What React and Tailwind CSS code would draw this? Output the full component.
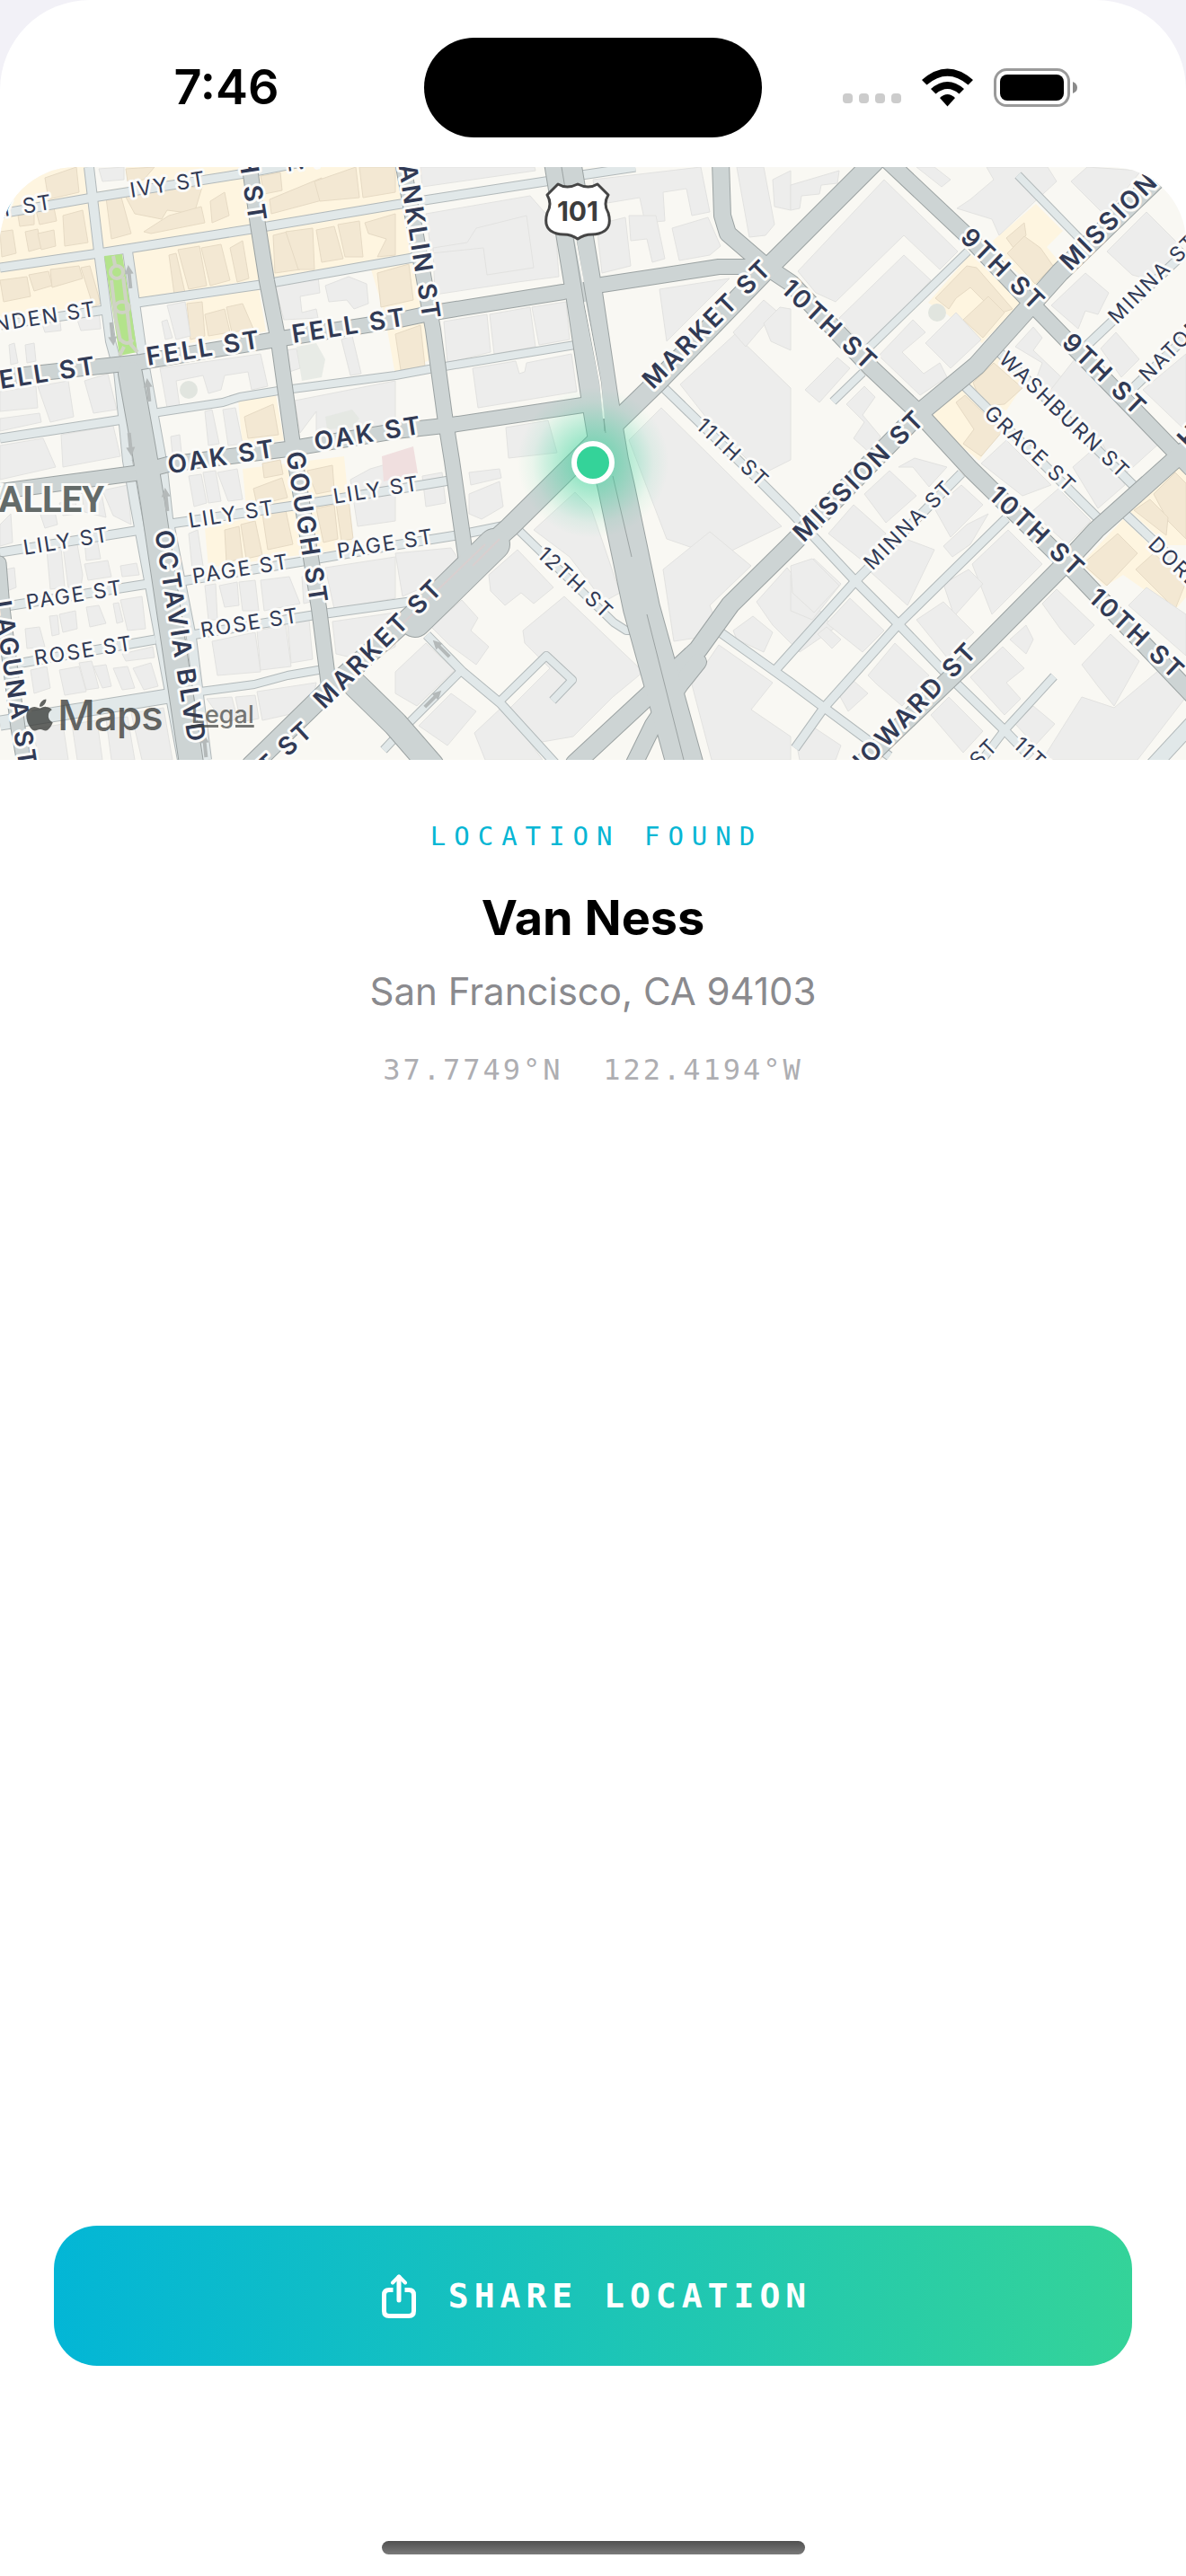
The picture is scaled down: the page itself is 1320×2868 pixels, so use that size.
import { FaApple } from 'react-icons/fa';

// Building footprints and lots of the map, as point lists
const warmZones = [
  '0,186 455,186 468,284 0,355',
  '207,336 288,321 296,369 211,382',
  '413,300 466,292 480,400 440,418 428,350',
  '265,445 307,440 316,490 270,498',
  '270,522 383,508 393,610 232,632 228,588 275,577',
  '1153,227 1183,257 1165,275 1182,295 1152,322 1110,283 1105,268',
  '1080,283 1137,337 1093,382 1054,350 1033,337',
  '1107,393 1140,427 1120,457 1097,450 1075,427',
  '1070,432 1113,477 1090,513 1033,467',
  '1310,515 1320,522 1320,607 1300,607 1258,570',
  '1250,578 1320,645 1320,665 1307,680 1250,640 1230,653 1203,628',
];

const warmBuildings = [
  '50,198 85,186 88,214 54,222', '20,240 38,237 38,250 22,252', '40,234 60,231 63,246 44,250',
  '70,240 92,234 98,270 72,274', '0,258 14,256 18,282 2,286', '28,258 42,255 46,276 32,280', '42,260 60,256 62,274 46,278',
  '0,312 30,308 34,330 4,336', '32,306 54,302 58,318 38,324', '56,300 88,296 92,310 58,320', '90,298 100,296 112,338 104,342',
  '118,220 134,216 146,260 124,266', '136,212 225,208 216,238 186,234 180,244 150,238', '160,258 188,240 224,230 228,248 168,260',
  '234,224 250,214 255,240 236,248', '140,188 172,186 160,200 142,202', '188,284 196,282 206,326 194,328', '198,278 222,274 230,318 210,322',
  '224,276 246,272 256,312 234,318', '256,276 270,268 277,310 264,314', '290,196 312,192 314,212 294,216', '300,222 358,198 362,222 302,238',
  '350,202 396,186 400,220 356,224', '400,186 440,186 440,214 404,220', '304,262 320,258 334,300 306,304', '318,258 348,254 350,300 332,300',
  '352,256 372,252 382,288 358,292', '376,250 400,246 404,286 384,286', '406,248 440,238 440,284 420,286 430,266 410,260',
  '208,338 225,336 228,374 212,378', '228,350 250,344 256,370 232,374', '252,342 270,338 282,366 258,370',
  '420,304 455,294 460,334 424,342', '440,372 468,362 473,408 446,412', '272,464 304,450 310,484 276,488',
  '292,516 312,512 315,528 294,532', '282,544 314,532 320,554 286,562', '250,590 266,586 270,622 252,626', '268,584 284,580 292,618 274,622',
  '292,572 318,568 326,606 298,612', '342,524 370,518 372,546 352,550', '352,566 372,562 376,600 360,604', '374,560 388,556 393,600 380,602',
  '1120,265 1140,248 1142,262 1128,276', '1121,282 1140,263 1158,276 1172,296 1152,316', '1041,332 1076,296 1087,298 1127,344 1110,350 1080,320 1064,332 1056,344',
  '1072,356 1100,330 1118,348 1094,376', '1083,426 1106,404 1138,432 1118,450 1094,452', '1064,448 1074,440 1116,480 1092,508 1072,494 1084,478',
  '1284,550 1308,526 1320,538 1320,600 1300,580', '1262,568 1280,556 1300,576 1298,596', '1205,628 1244,594 1266,616 1232,652', '1264,634 1284,616 1320,648 1308,678',
];

const greyBuildings = [
  '110,188 138,186 138,200 114,202', '44,352 66,350 68,368 50,370', '10,384 16,382 20,404 12,406', '28,384 38,382 40,402 30,404', '84,350 110,346 112,366 90,368',
  '0,436 40,430 42,454 0,458', '42,430 76,424 82,464 56,470', '94,424 120,416 130,456 104,460', '0,466 44,460 46,470 0,480',
  '0,496 48,488 62,520 0,534', '68,484 126,474 134,508 70,520', '180,358 186,356 192,376 184,378', '186,340 206,336 212,374 196,378',
  '178,410 290,394 298,430 280,434 276,414 250,418 246,434 232,438 226,418 196,424 200,452 186,454',
  '306,318 354,308 356,326 334,330 336,348 352,344 354,354 316,356', '362,318 388,308 408,316 410,338 394,344 386,334 366,336',
  '318,390 330,388 334,410 322,414', '380,378 392,374 402,416 390,418', '328,446 440,424 440,476 376,484 352,486 352,458 334,482',
  '228,458 236,456 244,494 232,496', '248,456 262,454 270,494 254,496', '190,486 200,484 202,504 192,506',
  '210,530 224,528 230,560 216,564', '226,526 240,524 246,558 232,560', '242,526 264,522 270,556 254,558', '210,594 220,590 226,630 214,634',
  '114,546 142,540 146,584 126,574', '90,544 112,544 118,576 94,570', '0,584 12,572 14,604 0,608', '44,570 60,564 64,584 50,588', '66,560 84,558 86,572 70,574',
  '52,612 68,610 72,654 56,656', '70,608 86,606 92,640 90,654 76,654', '94,602 108,600 112,622 96,624', '6,634 16,632 18,654 8,658',
  '94,628 120,624 124,642 98,646', '134,630 152,627 155,640 136,642', '28,700 44,698 50,720 30,722', '55,686 64,685 66,706 58,708', '66,684 84,680 86,700 70,704',
  '96,676 110,674 118,694 100,698', '126,672 132,671 137,692 130,694', '134,668 158,664 162,700 142,702', '136,728 170,720 172,732 140,736',
  '34,746 52,742 56,766 38,772', '66,746 88,742 96,770 72,774', '88,738 102,736 110,766 96,768', '104,742 118,740 124,764 114,766', '126,744 142,742 150,766 136,768', '148,744 168,738 176,764 160,768',
  '36,812 70,806 76,846 44,846', '80,806 108,802 114,846 86,846', '118,800 142,798 150,846 124,846', '146,794 182,788 192,846 158,846',
  '228,652 240,650 242,690 232,690', '244,652 264,648 266,674 250,676', '266,648 284,646 288,680 270,680', '290,646 322,642 334,672 294,680', '336,642 344,640 346,670 338,672',
  '236,714 284,704 290,748 242,752', '286,702 318,696 324,742 290,746', '320,694 344,690 348,734 324,738', '230,778 258,776 264,800 250,806', '262,776 284,774 288,800 268,804', '286,770 352,760 346,790 292,802',
  '390,534 412,522 440,514 440,580 398,586', '362,632 440,620 440,666 372,678', '370,692 440,682 440,720 408,736 374,728',
  '468,186 595,186 596,190 470,208', '474,238 590,218 618,250 622,308 576,314 550,318 484,328 482,276 520,270 530,254 586,240 594,298 542,306 538,276 480,282',
  '494,358 542,350 546,392 498,404', '545,350 590,342 596,386 550,394', '592,342 630,336 634,378 600,384', '526,410 574,402 578,416 584,414 586,404 636,394 642,436 532,454',
  '660,200 780,186 790,236 770,240 764,210 738,214 740,246 718,248 712,220 664,228', '664,250 696,242 702,296 670,304', '700,240 730,240 740,288 726,292 720,266 702,268',
  '748,254 788,242 802,274 790,284 756,290', '820,186 850,186 862,250 852,262 834,264', '860,200 880,190 880,234 862,230', '734,322 812,310 742,380',
  '757,428 818,372 880,432 880,512 848,528 790,470', '816,370 850,334 864,346 830,386', '850,360 868,342 880,344 880,390 858,380',
  '563,476 610,468 620,504 566,510', '700,490 736,454 870,586 800,620 742,600', '594,590 640,548 658,566 690,660 672,670 634,620',
  '738,634 790,592 836,630 790,674 802,706 750,714', '522,526 556,522 558,532 524,540', '522,550 556,536 560,564 536,578 522,572',
  '470,530 492,526 496,560 474,564', '440,616 502,610 510,622 480,650 448,664', '544,640 576,612 616,654 594,672 580,660 562,674 546,658',
  '480,698 514,668 532,688 524,702 544,720 530,740 500,718', '582,702 628,664 716,748 682,776 638,820 580,830 562,794 612,744 584,716',
  '440,748 474,716 506,746 464,786 440,772', '466,808 502,772 530,792 498,830', '528,816 560,786 604,846 540,846', '842,670 876,632 928,700 890,726 860,696',
  '816,702 838,686 860,704 850,726 820,712', '770,762 800,718 860,760 836,790 880,820 880,846 792,846', '880,640 906,622 936,650 904,690 880,680',
  '880,206 934,190 932,204 914,206 912,216 892,218 890,232 880,234', '888,302 984,200 1066,280 1046,300 1006,262 930,336 908,326', '934,354 1006,284 1036,312 964,390',
  '1020,186 1048,208 1058,200 1040,186', '1065,232 1080,222 1106,200 1098,186 1166,186 1176,202 1150,226 1112,262 1104,244', '1192,202 1210,186 1270,190 1230,240',
  '978,396 1016,356 1030,370 1004,392 1028,416 1046,404 1054,420 1024,440', '1030,382 1064,348 1092,378 1058,410', '896,434 932,398 946,410 912,448', '942,450 962,430 974,442 960,462 980,486 970,506 950,488 962,470',
  '1130,386 1150,364 1160,376 1150,390 1198,436 1180,460 1150,430 1160,404', '1170,340 1208,304 1234,326 1222,350 1208,346 1200,366', '1232,280 1276,236 1320,280 1282,312 1260,306', '1225,388 1242,370 1268,400 1248,420',
  '1196,400 1292,492 1250,530 1160,446', '1272,434 1320,394 1320,480', '1092,516 1120,490 1150,520 1170,540 1138,552', '1148,570 1178,544 1214,580 1188,606', '1194,520 1226,492 1252,540 1222,566',
  '962,550 990,524 1020,552 986,582', '1000,520 1018,510 1054,520 1034,542 1016,520', '922,594 950,562 986,594 962,626', '1040,566 1070,540 1094,562 1058,598', '968,636 1008,600 1040,612 1010,674', '1050,608 1076,584 1100,572 1080,606 1060,620',
  '1082,628 1122,590 1160,628 1104,684', '1050,650 1078,634 1094,650 1062,686', '1020,690 1050,670 1084,704 1054,732', '920,694 946,666 984,702 960,726', '966,752 996,716 1034,752 1004,786 976,762', '880,630 904,622 934,652 906,682 882,660',
  '910,706 920,698 936,712 926,722', '932,770 950,758 966,772 944,792', '1080,754 1116,720 1140,744 1120,760 1136,778 1118,796', '1036,796 1056,776 1094,814 1072,838', '1160,672 1176,656 1218,696 1196,718 1180,700',
  '1124,712 1142,696 1150,712 1142,728', '1204,740 1236,706 1268,736 1240,786 1222,764', '1256,674 1276,654 1320,684 1320,730', '1160,846 1204,776 1240,788 1290,746 1320,776 1266,846', '1130,806 1150,786 1174,806 1152,830', '886,826 900,806 936,830 930,846 890,846',
];

// Small alleys drawn in the light street colour: [points, width]
const minorStreets = [
  ['0,238 103,220 273,193 330,182', 9],
  ['0,298 110,282 280,255 440,228 607,202 647,195 707,186', 9],
  ['0,362 117,345', 9], ['153,337 290,317 465,286', 9],
  ['0,488 137,467', 9], ['170,460 248,448 267,442 310,435 440,418 483,410 640,384', 8],
  ['0,615 157,590', 9], ['190,583 327,563 440,545 500,535', 9],
  ['7,675 165,650', 9], ['203,647 337,625 440,607 508,596 563,585', 9],
  ['13,740 173,712', 9], ['213,707 348,685 363,683 456,670', 9],
  ['0,805 187,775', 15], ['223,770 283,762 320,752 360,745', 8],
  ['99,186 110,280 123,380 132,413 142,513 150,560 203,846', 10],
  ['142,280 157,387 180,513 187,577 213,710 230,846', 10],
  ['577,590 683,693 697,702 712,702', 8],
  ['737,430 850,540 880,570 952,647 1000,695 1053,750 1118,813 1147,843', 9],
  ['1070,527 952,647 880,727 863,746', 9], ['1120,577 1000,695 917,788 885,833', 9],
  ['803,705 880,760 990,842', 9], ['1207,387 1320,280', 9], ['1260,433 1320,375', 9],
  ['1133,195 1203,267', 8], ['1077,280 967,387', 8], ['960,415 927,447', 8],
  ['1110,390 1263,542', 9], ['1072,428 1223,578', 9], ['1253,573 1320,636', 9],
  ['1173,753 1118,813 1090,850', 8], ['1280,856 1330,802', 16],
  ['475,707 515,748 557,783 618,850', 9], ['512,748 455,805 427,835', 8], ['555,782 608,730 637,757 615,780', 8],
];

// Main streets, in the darker street colour
const majorStreets = [
  ['0,420 157,403 313,377 440,357 483,348 627,325 670,317 800,297 850,297', 16],
  ['0,547 150,527 187,517 320,500 440,480 503,473 655,450', 16],
  ['145,416 160,500 170,560 213,850', 26],
  ['277,180 287,250 297,313 310,380 328,510 347,627 355,677 363,740 366,764', 16],
  ['448,180 470,300 482,367 495,463 503,513 519,625', 16],
  ['-1,627 3,677 20,810 27,850', 15],
  ['802,180 804,240 810,260 853,297 880,315 970,410 1023,460 1080,522 1193,633 1330,777', 18],
  ['989,180 1077,263 1150,340 1330,526', 17],
  ['973,180 850,303 730,427 660,495 567,587 497,650 367,767 280,852', 21],
  ['550,606 497,658 462,692', 34],
  ['1320,168 1180,303 1087,407 1023,460 880,607 813,673 777,723 723,773 640,850', 20],
  ['777,737 757,762 727,807 706,850', 18],
  ['1325,496 1220,590 1183,630 1087,727 980,830 960,850', 19],
  ['396,763 440,806 480,852', 27],
  ['626,180 648,313 668,447 679,513 686,543 714,677 762,850', 40],
];

// [text, x, y, angle]
const mainLabels = [
  ['FELL ST', 44, 416, -9], ['FELL ST', 227, 387, -9], ['FELL ST', 389, 362, -9],
  ['OAK ST', 247, 508, -9], ['OAK ST', 410, 482, -9],
  ['GOUGH ST', 274, 163, 81], ['GOUGH ST', 342, 588, 81], ['FRANKLIN ST', 464, 250, 81],
  ['OCTAVIA BLVD', 201, 709, 81], ['LAGUNA ST', 17, 762, 81],
  ['MARKET ST', 787, 360, -45], ['MARKET ST', 421, 716, -45], ['MARKET ST', 275, 872, -43],
  ['10TH ST', 924, 362, 43], ['10TH ST', 1155, 592, 43], ['10TH ST', 1266, 706, 43],
  ['9TH ST', 1117, 300, 44], ['9TH ST', 1230, 417, 44],
  ['MISSION ST', 956, 529, -45], ['MISSION ST', 1253, 227, -45],
  ['HOWARD ST', 1014, 790, -46], ['HOWARD ST', 1384, 422, -46],
];

const alleyLabels = [
  ['IVY ST', 16, 231, -9], ['IVY ST', 187, 205, -9], ['IVY ST', 361, 176, -9], ['LINDEN ST', 39, 354, -9],
  ['LILY ST', 74, 602, -9], ['LILY ST', 258, 572, -9], ['LILY ST', 419, 545, -9],
  ['PAGE ST', 83, 662, -9], ['PAGE ST', 268, 633, -9], ['PAGE ST', 429, 605, -9],
  ['ROSE ST', 93, 724, -9], ['ROSE ST', 278, 693, -9],
  ['11TH ST', 816, 504, 43], ['12TH ST', 641, 649, 43], ['11TH ST', 1169, 859, 43],
  ['MINNA ST', 1011, 584, -45], ['MINNA ST', 1283, 310, -45], ['NATOMA ST', 1326, 366, -45], ['NATOMA ST', 1053, 881, -46],
  ['WASHBURN ST', 1185, 462, 44], ['GRACE ST', 1147, 500, 43], ['DORE ST', 1323, 641, 44],
];

// One-way arrows: [x, y, angle]
const arrows = [[144, 308, -6], [125, 372, 174], [165, 434, -6], [145, 495, 174], [185, 556, -6], [491, 722, -45], [482, 778, 45], [228, 830, -6]];

// Every casing goes below every fill, so that crossings stay open
const Streets = ({ lines, casing, fill, cap }) => (
  <g fill="none" strokeLinejoin="round" strokeLinecap={cap}>
    {lines.map(([points, width]) => (
      <polyline key={points} points={points} stroke={casing} strokeWidth={width + 2} />
    ))}
    {lines.map(([points, width]) => (
      <polyline key={points} points={points} stroke={fill} strokeWidth={width} />
    ))}
  </g>
);

const Labels = ({ items, className }) => (
  <g className={className} textAnchor="middle" fill="#313a55" stroke="#fbfbf9" strokeWidth="6" strokeLinejoin="round" paintOrder="stroke">
    {items.map(([text, x, y, angle]) => (
      <text key={`${text}-${x}`} transform={`translate(${x} ${y}) rotate(${angle})`} dy="0.36em">
        {text}
      </text>
    ))}
  </g>
);

const CityMap = () => (
  <svg viewBox="0 186 1320 660" preserveAspectRatio="xMidYMid slice" className="block h-full w-full font-[Inter,sans-serif]" aria-label="Map of Van Ness, San Francisco">
    <defs>
      <radialGradient id="pin-glow">
        <stop offset="0.2" stopColor="#34d399" stopOpacity="0.55" />
        <stop offset="0.5" stopColor="#34d399" stopOpacity="0.32" />
        <stop offset="0.8" stopColor="#34d399" stopOpacity="0.08" />
        <stop offset="1" stopColor="#34d399" stopOpacity="0" />
      </radialGradient>
    </defs>
    <rect x="0" y="186" width="1320" height="660" fill="#f9f8f3" />

    {/* Lots and buildings */}
    <g fill="#fef5e0">
      {warmZones.map((points) => <polygon key={points} points={points} />)}
    </g>
    <polygon points="100,186 140,186 143,208 104,214" fill="#f9f8f3" />
    <g fill="#f3e8d3" stroke="#e6dac4" strokeWidth="1">
      {warmBuildings.map((points) => <polygon key={points} points={points} />)}
    </g>
    <g fill="#ededec" stroke="#e2e2e0" strokeWidth="1">
      {greyBuildings.map((points) => <polygon key={points} points={points} />)}
    </g>
    <polygon points="425,508 460,497 465,527 427,536" fill="#f0dfdf" />
    <g fill="#e1e5df">
      <circle cx="210" cy="434" r="10" />
      <circle cx="1043" cy="348" r="10" />
      <path d="M330 386l22-4 10 18-4 20-22 4z" opacity="0.7" />
      <path d="M362 464l30-8 8 10-8 10-28 2z" opacity="0.7" />
    </g>

    <Streets lines={minorStreets} casing="#b2b9ba" fill="#e1e8e9" cap="butt" />

    {/* Small park between the two lanes of Octavia */}
    <polygon points="116,285 136,283 153,392 133,396" fill="#b3e38b" />
    <g fill="none" stroke="#cfd3c4" strokeWidth="4">
      <path d="M126 285l2 10M124 312l5 44 5 24M137 308l9 76 7 8M133 396l5-10" />
      <circle cx="130" cy="303" r="7" />
      <ellipse cx="136" cy="342" rx="8" ry="6" />
      <path d="M134 378q8 8 14 0" />
    </g>

    <Streets lines={majorStreets} casing="#9ba2a2" fill="#cdd4d4" cap="round" />

    {/* Median of the highway */}
    <path d="M625 186l4 24M637 258l14 86 16 80 7 58M640 258l13 78 16 90 4 54M682 530l21 90M720 684l41 162" fill="none" stroke="#9ba2a2" strokeWidth="1" />
    <path d="M640 264l9 50M651 336l17 90 4 40" fill="none" stroke="#f9f8f3" strokeWidth="2" />
    <path d="M556 600l-30 30M540 606l-100 96" fill="none" stroke="#d9cfcf" strokeWidth="2" />

    <g fill="#b4b9b9">
      {arrows.map(([x, y, angle]) => (
        <path key={x} transform={`translate(${x} ${y}) rotate(${angle})`} d="M0-13l5 10h-3v16h-4v-16h-3z" />
      ))}
    </g>

    <Labels items={alleyLabels} className="text-[23px] tracking-[2px]" />
    <Labels items={mainLabels} className="text-[28px] font-semibold tracking-[3px]" />
    <text x="116" y="570" textAnchor="end" fill="#646b69" stroke="#fbfbf9" strokeWidth="6" paintOrder="stroke" className="font-[Roboto,sans-serif] text-[40px] font-bold">
      HAYES VALLEY
    </text>

    {/* Highway shield */}
    <path
      d="M621 205q10 6 22 0q12 6 22 0l12 12q-6 10 0 20q4 14-4 20q-6 4-14 4q-9 0-16 5q-7-5-16-5q-8 0-14-4q-8-6-4-20q6-10 0-20z"
      fill="#fff" stroke="#454545" strokeWidth="3" strokeLinejoin="round"
    />
    <text x="643" y="246" textAnchor="middle" fill="#3c3c3c" className="text-[30px] font-bold">101</text>

    {/* Current position */}
    <circle cx="660" cy="515" r="84" fill="url(#pin-glow)" />
    <circle cx="660" cy="515" r="21" fill="#34d399" stroke="#fff" strokeWidth="6" />
  </svg>
);

const StatusBar = () => (
  <header className="grid h-[186px] grid-cols-[1fr_376px_1fr] items-center pt-2">
    <time className="pl-8 text-center font-[Inter,sans-serif] text-[54px] leading-none font-semibold">7:46</time>
    <div className="h-[111px] rounded-full bg-black" />
    <div className="flex items-end justify-center gap-[23px] pr-8">
      <div className="flex gap-[7px] pb-1">
        <span className="size-[11px] rounded-[4px] bg-[#cccccc]" />
        <span className="size-[11px] rounded-[4px] bg-[#cccccc]" />
        <span className="size-[11px] rounded-[4px] bg-[#cccccc]" />
        <span className="size-[11px] rounded-[4px] bg-[#cccccc]" />
      </div>
      <svg viewBox="0 0 57 43" className="h-[43px] w-[57px]" aria-label="Wi-Fi">
        <path d="M0 13Q28.500-12 57 13L51.500 18.500Q28.500-1 5.500 18.500Z" />
        <path d="M10 23Q28.500 7 47 23L41.500 28.500Q28.500 17.500 15.500 28.500Z" />
        <path d="M20 33Q28.500 25 37 33L28.500 42.500Z" />
      </svg>
      <svg viewBox="0 0 93 43" className="h-[43px] w-[93px]" aria-label="Battery">
        <rect x="1.500" y="1.500" width="82" height="40" rx="13" fill="none" stroke="#9a9a9a" strokeWidth="3" />
        <rect x="7" y="7" width="71" height="29" rx="8" />
        <path d="M88 15Q93 17 93 21.500Q93 26 88 28Z" fill="#8a8a8a" />
      </svg>
    </div>
  </header>
);

const ShareIcon = () => (
  <svg viewBox="0 0 38 49" className="h-[49px] w-[38px]" fill="none" stroke="currentColor" strokeWidth="5" strokeLinecap="round" strokeLinejoin="round">
    <path d="M12.500 17.500H8Q2.500 17.500 2.500 23V41Q2.500 46.500 8 46.500H30Q35.500 46.500 35.500 41V23Q35.500 17.500 30 17.500H25.500" strokeLinecap="butt" />
    <path d="M19 29V3" />
    <path d="M12 9.500L19 2.500L26 9.500" strokeWidth="4" />
  </svg>
);

export default function App() {
  return (
    <div className="min-h-screen bg-[#f2f1f7]">
      <div className="flex min-h-screen flex-col rounded-t-[100px] bg-white text-black">
        <StatusBar />

        {/* Map with its attribution on top */}
        <section className="relative aspect-[2/1] w-full overflow-hidden rounded-t-[84px]">
          <CityMap />
          <div className="absolute bottom-5 left-6 flex items-center gap-8 font-[Inter,sans-serif] text-[#3c3e3c]/80">
            <div className="flex items-center">
              <FaApple className="size-10" />
              <span className="text-[46px] leading-[60px] font-medium tracking-tight">Maps</span>
            </div>
            <a href="#legal" className="text-[27px] font-medium text-[#3c3e3c]/70 underline decoration-3">Legal</a>
          </div>
        </section>

        <main className="flex flex-1 flex-col items-center pt-[65px] text-center">
          <p className="pl-2 font-['DejaVu_Sans_Mono',monospace] text-[29px] leading-10 tracking-[9px] text-[#06b6d4]">LOCATION FOUND</p>
          <h1 className="mt-9 font-[Inter,sans-serif] text-[54px] leading-[70px] font-bold">Van Ness</h1>
          <p className="mt-5 font-[Inter,sans-serif] text-[42px] leading-[54px] text-[#8a8a8e]">San Francisco, CA 94103</p>
          <p className="mt-9 font-['DejaVu_Sans_Mono',monospace] text-[32px] leading-[48px] tracking-[3px] whitespace-pre text-[#aeaeb2]">37.7749°N  122.4194°W</p>
        </main>

        <footer className="flex flex-col items-center px-[60px] pb-6">
          <button type="button" className="flex h-[156px] w-full items-center justify-center gap-9 rounded-[48px] bg-linear-to-r/srgb from-[#03b6d6] to-[#34d399] pl-2 text-white">
            <ShareIcon />
            <span className="font-['DejaVu_Sans_Mono',monospace] text-[38px] font-bold tracking-[6px]">SHARE LOCATION</span>
          </button>
          <div className="mt-[195px] h-[15px] w-[471px] rounded-full bg-linear-to-b from-[#505050] to-[#7a7a7a]" />
        </footer>
      </div>
    </div>
  );
}
